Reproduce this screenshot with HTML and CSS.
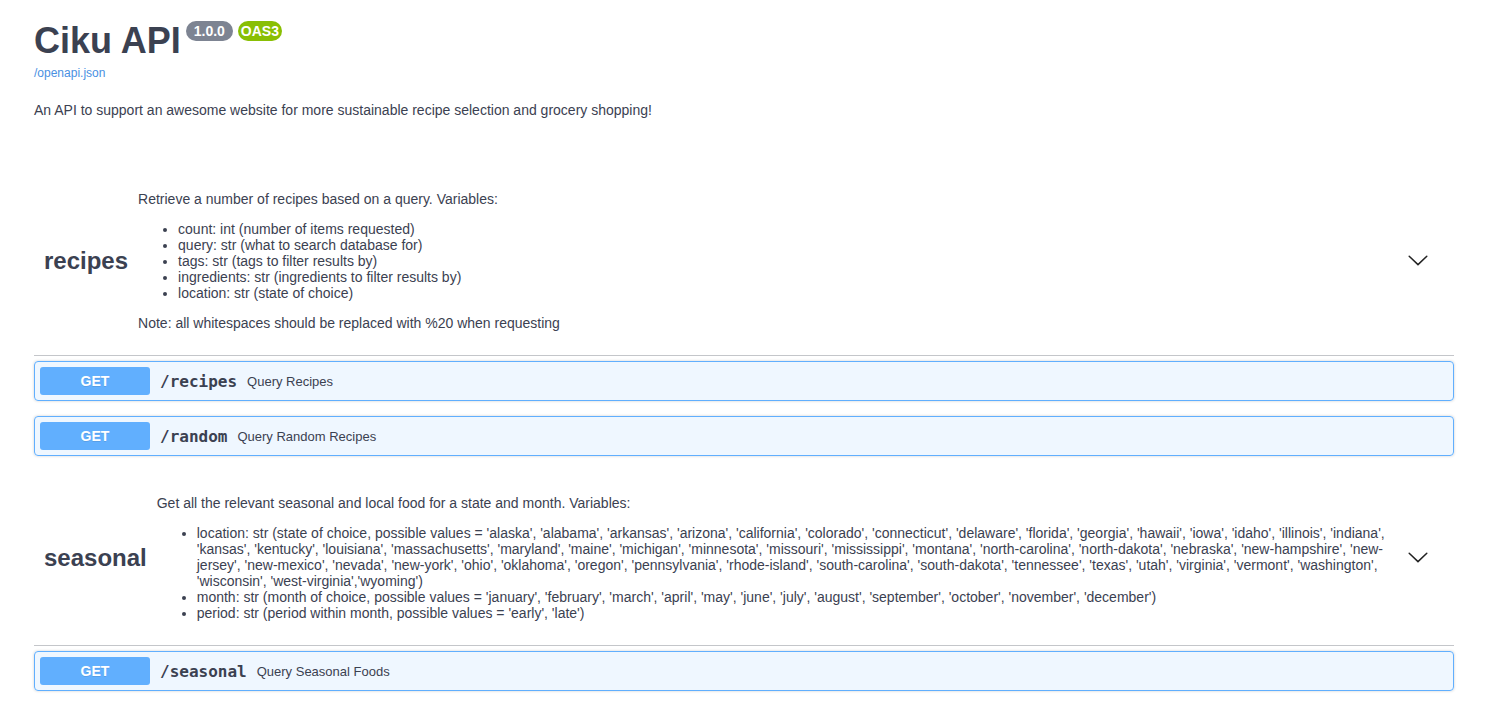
FILE: index.html
```html
<!DOCTYPE html>
<html lang="en">
<head>
<meta charset="utf-8">
<title>Ciku API</title>
<link rel="stylesheet" href="styles.css">
</head>
<body>
<div class="wrapper">
  <section class="info">
    <div class="title-row">
      <h2 class="title">Ciku API</h2>
      <span class="badge badge-version">1.0.0</span>
      <span class="badge badge-oas">OAS3</span>
    </div>
    <a class="base-url" href="#">/openapi.json</a>
    <div class="description">
      <p>An API to support an awesome website for more sustainable recipe selection and grocery shopping!</p>
    </div>
  </section>

  <section class="tag-section">
    <h3 class="opblock-tag">
      <span class="tag-name">recipes</span>
      <div class="tag-desc">
        <p>Retrieve a number of recipes based on a query. Variables:</p>
        <ul>
          <li>count: int (number of items requested)</li>
          <li>query: str (what to search database for)</li>
          <li>tags: str (tags to filter results by)</li>
          <li>ingredients: str (ingredients to filter results by)</li>
          <li>location: str (state of choice)</li>
        </ul>
        <p>Note: all whitespaces should be replaced with %20 when requesting</p>
      </div>
      <button class="expand" type="button" aria-label="expand">
        <svg width="20" height="20" viewBox="0 0 20 20"><polyline points="1.2,5.2 10,13.6 18.8,5.2" fill="none" stroke="#222" stroke-width="1.5" stroke-linecap="round" stroke-linejoin="miter"/></svg>
      </button>
    </h3>
    <div class="opblock">
      <span class="method">GET</span>
      <span class="path">/recipes</span>
      <span class="summary">Query Recipes</span>
    </div>
    <div class="opblock">
      <span class="method">GET</span>
      <span class="path">/random</span>
      <span class="summary">Query Random Recipes</span>
    </div>
  </section>

  <section class="tag-section">
    <h3 class="opblock-tag">
      <span class="tag-name">seasonal</span>
      <div class="tag-desc">
        <p>Get all the relevant seasonal and local food for a state and month. Variables:</p>
        <ul>
          <li>location: str (state of choice, possible values = 'alaska', 'alabama', 'arkansas', 'arizona', 'california', 'colorado', 'connecticut', 'delaware', 'florida', 'georgia', 'hawaii', 'iowa', 'idaho', 'illinois', 'indiana', 'kansas', 'kentucky', 'louisiana', 'massachusetts', 'maryland', 'maine', 'michigan', 'minnesota', 'missouri', 'mississippi', 'montana', 'north-carolina', 'north-dakota', 'nebraska', 'new-hampshire', 'new-jersey', 'new-mexico', 'nevada', 'new-york', 'ohio', 'oklahoma', 'oregon', 'pennsylvania', 'rhode-island', 'south-carolina', 'south-dakota', 'tennessee', 'texas', 'utah', 'virginia', 'vermont', 'washington', 'wisconsin', 'west-virginia','wyoming')</li>
          <li>month: str (month of choice, possible values = 'january', 'february', 'march', 'april', 'may', 'june', 'july', 'august', 'september', 'october', 'november', 'december')</li>
          <li>period: str (period within month, possible values = 'early', 'late')</li>
        </ul>
      </div>
      <button class="expand" type="button" aria-label="expand">
        <svg width="20" height="20" viewBox="0 0 20 20"><polyline points="1.2,5.2 10,13.6 18.8,5.2" fill="none" stroke="#222" stroke-width="1.5" stroke-linecap="round" stroke-linejoin="miter"/></svg>
      </button>
    </h3>
    <div class="opblock">
      <span class="method">GET</span>
      <span class="path">/seasonal</span>
      <span class="summary">Query Seasonal Foods</span>
    </div>
  </section>
</div>
</body>
</html>
```

FILE: styles.css
```css
html, body {
  margin: 0;
  padding: 0;
  background: #fff;
}

body {
  font-family: "Liberation Sans", Arial, sans-serif;
  color: #3b4151;
}

.wrapper {
  width: 1420px;
  padding: 0 36px 0 34px;
}

.info {
  padding-top: 20px;
  margin-bottom: 49px;
}

.title-row {
  display: flex;
  align-items: flex-start;
}

.title {
  margin: 0;
  font-size: 36px;
  line-height: 41px;
  font-weight: 700;
  color: #3b4151;
}

.badge {
  display: inline-block;
  margin: 1px 0 0 5px;
  padding: 2px 4px;
  border-radius: 57px;
  font-size: 14px;
  line-height: 16px;
  font-weight: 700;
  color: #fff;
}

.badge-version {
  background: #7d8492;
  padding: 2px 8px;
}

.badge-oas {
  background: #89bf04;
  padding: 2px 3px;
}

.base-url {
  display: block;
  margin-top: 5px;
  font-size: 12px;
  line-height: 14px;
  color: #4990e2;
  text-decoration: none;
}

.description p {
  margin: 22px 0 0;
  font-size: 14px;
  line-height: 16px;
}

.tag-section {
  display: flex;
  flex-direction: column;
}

.opblock-tag {
  display: flex;
  align-items: center;
  margin: 0 0 5px;
  padding: 10px 20px 10px 10px;
  border-bottom: 1px solid rgba(59, 65, 81, 0.3);
  font-size: 24px;
  font-weight: 700;
  color: #3b4151;
}

.tag-name {
  white-space: nowrap;
}

.tag-desc {
  flex: 1;
  padding: 0 10px;
  font-size: 14px;
  line-height: 16px;
  font-weight: 400;
  color: #3b4151;
}

.tag-desc p {
  margin: 14px 0;
}

.tag-desc ul {
  margin: 14px 0;
  padding-left: 40px;
}

.expand {
  border: none;
  background: none;
  padding: 1px 6px;
  display: flex;
  align-items: center;
  cursor: pointer;
}

.expand svg {
  display: block;
}

.opblock {
  display: flex;
  align-items: center;
  margin: 0 0 15px;
  padding: 5px;
  border: 1px solid #61affe;
  border-radius: 4px;
  background: rgba(97, 175, 254, 0.1);
  box-shadow: 0 0 3px rgba(0, 0, 0, 0.19);
}

.method {
  min-width: 80px;
  padding: 6px 15px;
  border-radius: 3px;
  background: #61affe;
  color: #fff;
  font-size: 14px;
  line-height: 16px;
  font-weight: 700;
  text-align: center;
  text-shadow: 0 1px 0 rgba(0, 0, 0, 0.1);
}

.path {
  padding: 0 10px;
  font-family: "DejaVu Sans Mono", monospace;
  font-size: 16px;
  font-weight: 700;
  color: #3b4151;
}

.summary {
  font-size: 13px;
  color: #3b4151;
}
```
